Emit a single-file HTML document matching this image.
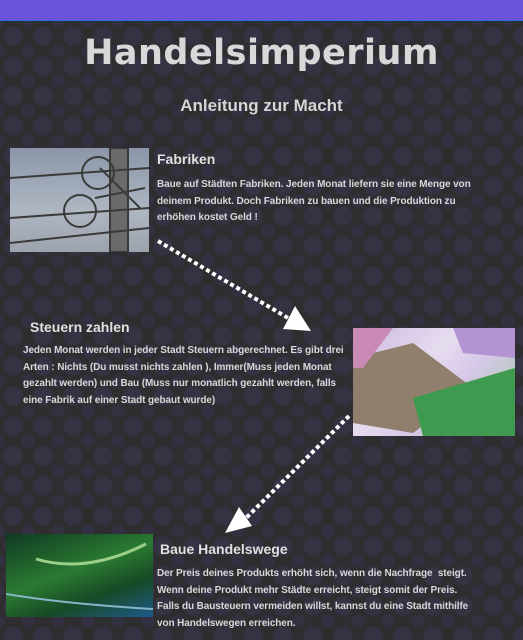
<!DOCTYPE html>
<html><head><meta charset="utf-8"><style>
*{margin:0;padding:0}
body{width:523px;height:640px;overflow:hidden;position:relative;background:#2e2d30;font-family:"Liberation Sans",sans-serif;color:#dcdcdc}
.bg{position:absolute;left:0;top:21px;width:523px;height:619px;
background-image:radial-gradient(circle,#353343 0 9px,transparent 10px),radial-gradient(circle,#333141 0 6px,transparent 7px);
background-size:30px 30px,30px 30px;background-position:-2px 0,13px 15px}
.top{position:absolute;left:0;top:0;width:523px;height:20px;background:#6b53d9;border-bottom:1px solid #2f6ae0}
.t{position:absolute;white-space:nowrap}
h1{position:absolute;left:0;width:523px;top:33px;text-align:center;font:bold 35px "DejaVu Sans",sans-serif;color:#d8d8d8;letter-spacing:0.5px}
.sub{left:0;width:523px;top:96px;text-align:center;font-size:17px;font-weight:bold;color:#d5d5d5}
.h{font-size:14px;font-weight:bold;color:#e0e0e0}
.p{font-size:10px;font-weight:bold;line-height:16.5px;color:#d8d8d8;letter-spacing:-0.1px}
.img{position:absolute}
</style></head><body>
<div class="bg"></div>
<div class="top"></div>
<h1>Handelsimperium</h1>
<div class="t sub">Anleitung zur Macht</div>

<div class="img" style="left:10px;top:148px;width:139px;height:104px;background:linear-gradient(180deg,#8a96a8,#aeb6c2 60%,#9ca3ad)">
<svg width="139" height="104"><g stroke="#3a3a3a" fill="none" stroke-width="2"><rect x="100" y="0" width="18" height="104" fill="#6a6a6a"/><circle cx="88" cy="25" r="16"/><circle cx="70" cy="63" r="16"/><path d="M0 30L139 20M0 70L139 60M0 95L139 80"/><path d="M90 20L130 60M85 50L135 40"/></g></svg></div>
<div class="t h" style="left:157px;top:151px">Fabriken</div>
<div class="t p" style="left:157px;top:177px">Baue auf Städten Fabriken. Jeden Monat liefern sie eine Menge von<br>deinem Produkt. Doch Fabriken zu bauen und die Produktion zu<br>erhöhen kostet Geld !</div>

<div class="t h" style="left:30px;top:319px">Steuern zahlen</div>
<div class="t p" style="left:23px;top:343px">Jeden Monat werden in jeder Stadt Steuern abgerechnet. Es gibt drei<br>Arten : Nichts (Du musst nichts zahlen ), Immer(Muss jeden Monat<br>gezahlt werden) und Bau (Muss nur monatlich gezahlt werden, falls<br>eine Fabrik auf einer Stadt gebaut wurde)</div>
<div class="img" style="left:353px;top:328px;width:162px;height:108px;background:linear-gradient(135deg,#c9b9e0,#e6dcef 40%,#d6c8e8 60%,#8fc68a)">
<svg width="162" height="108"><path d="M0 30L60 15L120 60L60 105L0 95Z" fill="#8f7f6c"/><path d="M60 70L162 40L162 108L70 108Z" fill="#3e9a4f"/><path d="M100 0L162 0L162 30L110 25Z" fill="#b394d2"/><path d="M0 0L40 0L10 40L0 40Z" fill="#c98ab5"/></svg></div>

<div class="t h" style="left:160px;top:541px">Baue Handelswege</div>
<div class="t p" style="left:157px;top:566px">Der Preis deines Produkts erhöht sich, wenn die Nachfrage&nbsp; steigt.<br>Wenn deine Produkt mehr Städte erreicht, steigt somit der Preis.<br>Falls du Bausteuern vermeiden willst, kannst du eine Stadt mithilfe<br>von Handelswegen erreichen.</div>
<div class="img" style="left:6px;top:534px;width:147px;height:83px;background:linear-gradient(160deg,#0f3a22,#2a7a32 45%,#184a26 70%,#1d5a8a)">
<svg width="147" height="83"><path d="M30 25Q80 40 140 10" stroke="#9ccf8a" stroke-width="3" fill="none"/><path d="M0 60Q60 70 147 75" stroke="#86b5c8" stroke-width="2" fill="none"/></svg></div>

<svg style="position:absolute;left:0;top:0" width="523" height="640">
<g stroke="#fff" stroke-width="4" stroke-dasharray="4 3" fill="none">
<path d="M158 241L288 318"/><path d="M349 416L244 520"/></g>
<path d="M295 306L283 329L311 331Z" fill="#fff"/>
<path d="M225 533L239 507L252 526Z" fill="#fff"/>
</svg>
</body></html>
